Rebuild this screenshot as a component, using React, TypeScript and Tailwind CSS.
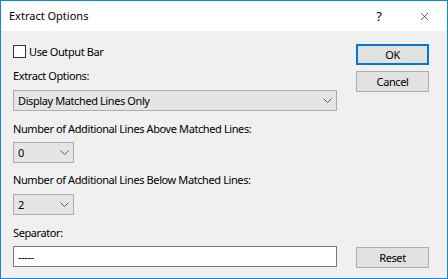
import { X } from 'lucide-react';

function Chevron() {
  return (
    <svg width="9" height="5" viewBox="0 0 9 5" className="shrink-0">
      <polyline points="0.5,0.5 4.5,4.5 8.5,0.5" fill="none" stroke="#5a5a5a" strokeWidth="1" />
    </svg>
  );
}

function Combo({ value, wide }: { value: string; wide?: boolean }) {
  return (
    <div className={(wide ? 'w-[324px]' : 'w-[61px]') + ' h-[21px] flex items-center justify-between px-[4px] bg-[#e5e5e5] border border-[#adadad]'}>
      <span className="leading-[16px]">{value}</span>
      <Chevron />
    </div>
  );
}

function Btn({ label, primary }: { label: string; primary?: boolean }) {
  return (
    <button
      className={
        primary
          ? 'w-[73px] h-[21px] flex items-center justify-center bg-[#e1e1e1] border-2 border-[#0078d7] leading-[16px]'
          : 'w-[73px] h-[21px] flex items-center justify-center bg-[#e1e1e1] border border-[#adadad] leading-[16px]'
      }
    >
      {label}
    </button>
  );
}

export default function App() {
  return (
    <div className="w-[448px] h-[279px] flex flex-col border border-[#1883d7] bg-[#f0f0f0] text-[11px] text-black overflow-hidden font-['Noto_Sans',sans-serif]">
      {/* title bar */}
      <div className="h-[30px] shrink-0 flex items-center bg-white pl-[8px]">
        <span className="leading-[16px] flex-1">Extract Options</span>
        <span className="leading-[16px] text-[13px] mr-[36px]">?</span>
        <X size={13} strokeWidth={1.1} className="mr-[16px] text-black" />
      </div>

      <div className="flex-1 flex pl-[12px] tracking-[-0.4px]">
        {/* left column */}
        <div className="w-[324px] flex flex-col">
          <label className="mt-[14px] h-[13px] flex items-center">
            <span className="w-[13px] h-[13px] border border-[#333333] bg-white shrink-0" />
            <span className="ml-[3px] leading-[16px]">Use Output Bar</span>
          </label>

          <div className="mt-[10px] h-[16px] leading-[16px]">Extract Options:</div>
          <div className="mt-[6px]">
            <Combo value="Display Matched Lines Only" wide />
          </div>

          <div className="mt-[10px] h-[16px] leading-[16px]">Number of Additional Lines Above Matched Lines:</div>
          <div className="mt-[5px]">
            <Combo value="0" />
          </div>

          <div className="mt-[9px] h-[16px] leading-[16px]">Number of Additional Lines Below Matched Lines:</div>
          <div className="mt-[6px]">
            <Combo value="2" />
          </div>

          <div className="mt-[10px] h-[16px] leading-[16px]">Separator:</div>
          <div className="mt-[5px] w-[324px] h-[21px] flex items-center pl-[4px] bg-white border border-[#7a7a7a]">
            <span className="leading-[16px]">-----</span>
          </div>
        </div>

        {/* right column */}
        <div className="ml-[19px] w-[73px] flex flex-col">
          <div className="mt-[13px]">
            <Btn label="OK" primary />
          </div>
          <div className="mt-[6px]">
            <Btn label="Cancel" />
          </div>
          <div className="flex-1" />
          <div className="mb-[10px]">
            <Btn label="Reset" />
          </div>
        </div>
      </div>
    </div>
  );
}
